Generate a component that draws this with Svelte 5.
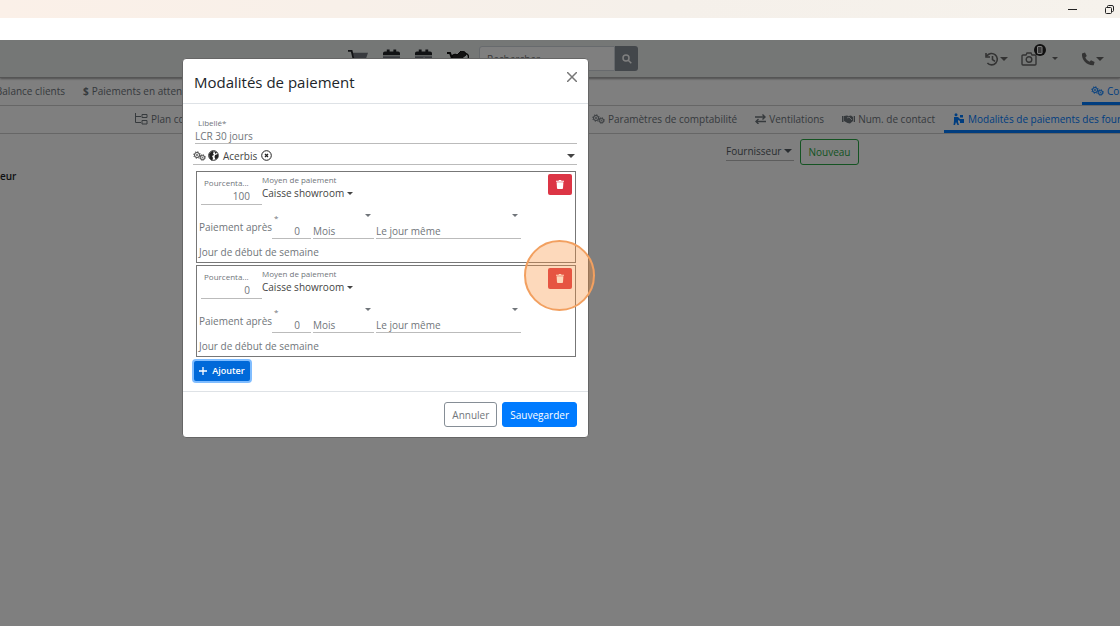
<script>
  let rows = $state([
    { percent: "100", delay: "0" },
    { percent: "0", delay: "0" },
  ]);
  let label = $state("LCR 30 jours");

  function addRow() {
    rows.push({ percent: "0", delay: "0" });
  }

  function removeRow(index) {
    rows = rows.filter((_, i) => i !== index);
  }
</script>

{#snippet gears()}
  <svg class="icon-gears" viewBox="0 0 26 20" fill="none" stroke="currentColor" aria-hidden="true">
    <circle cx="8" cy="8" r="5" stroke-width="2" />
    <circle cx="8" cy="8" r="6.5" stroke-width="2" stroke-dasharray="2.5 2.6" />
    <circle cx="8" cy="8" r="1.5" stroke-width="1.5" />
    <circle cx="19" cy="13" r="4.2" stroke-width="2" />
    <circle cx="19" cy="13" r="5.6" stroke-width="2" stroke-dasharray="2.2 2.2" />
    <circle cx="19" cy="13" r="1" stroke-width="1.5" />
  </svg>
{/snippet}

{#snippet calendar(dot)}
  <svg class="icon-calendar" viewBox="0 0 18 20" aria-hidden="true">
    <path d="M2 2h2V0h3v2h4V0h3v2h2a2 2 0 0 1 2 2v2H0V4a2 2 0 0 1 2-2z" fill="#222428" />
    <path d="M0 7h18v11a2 2 0 0 1-2 2H2a2 2 0 0 1-2-2z" fill="#70747c" />
    {#if dot}<path d="M7 10l3-2v10H8v-7z" fill="#ddd" />{/if}
  </svg>
{/snippet}

<div class="titlebar">
  <button aria-label="Réduire">
    <svg width="9" height="9" viewBox="0 0 9 9"><path d="M0 4.5h9" stroke="#222" /></svg>
  </button>
  <button aria-label="Restaurer">
    <svg width="9" height="9" viewBox="0 0 9 9" fill="none" stroke="#222">
      <rect x="0.5" y="2.5" width="6" height="6" rx="1" />
      <path d="M2.5 2V1.5a1 1 0 0 1 1-1H7a1.5 1.5 0 0 1 1.5 1.5v3.5a1 1 0 0 1-1 1H7" />
    </svg>
  </button>
</div>
<div class="toolbar"></div>

<div class="page">
  <header>
    <div class="shortcuts">
      <svg class="icon-cart" viewBox="0 0 22 20" aria-hidden="true">
        <path d="M5 3h17l-3 9H7z" fill="#70747c" />
        <path d="M0 1h4l3 13h12" fill="none" stroke="#222428" stroke-width="2" />
        <circle cx="9" cy="18" r="2" /><circle cx="17" cy="18" r="2" />
      </svg>
      {@render calendar(false)}
      {@render calendar(true)}
      <svg class="icon-moto" viewBox="0 0 22 16" fill="none" stroke="#111" aria-hidden="true">
        <path d="M0 2h3l3 8h6" stroke-width="2" />
        <circle cx="8" cy="7" r="3" stroke-width="2" />
        <circle cx="18" cy="6" r="3.5" stroke-width="1.5" />
        <path d="M5 5l3-2 2 1 4-4 4 1 1 3-4 3-3 3H8z" fill="#222" />
      </svg>
    </div>
    <form class="search">
      <input type="search" placeholder="Rechercher" aria-label="Rechercher" />
      <button type="button" aria-label="Lancer la recherche">
        <svg width="10" height="10" viewBox="0 0 10 10" fill="none" stroke="#fff" stroke-width="1.5">
          <circle cx="4" cy="4" r="3" /><path d="M6.2 6.2L9.3 9.3" />
        </svg>
      </button>
    </form>
    <div class="tools">
      <button class="tool" aria-label="Historique">
        <svg width="14" height="14" viewBox="0 0 14 14" fill="none" stroke="currentColor" stroke-width="1.6">
          <path d="M2 3.8A5.700 5.700 0 1 1 2.400 11M1 1v4h4M7.500 4v3.500l2.500 1.800" />
        </svg>
        <span class="caret"></span>
      </button>
      <button class="tool camera" aria-label="Photos">
        <svg width="16" height="14" viewBox="0 0 16 14" fill="none" stroke="currentColor" stroke-width="1.4">
          <path d="M2 3h3l1-2h4l1 2h3a1 1 0 0 1 1 1v8a1 1 0 0 1-1 1H2a1 1 0 0 1-1-1V4a1 1 0 0 1 1-1z" />
          <circle cx="8" cy="7.5" r="2.8" />
        </svg>
        <svg class="phone-badge" width="12" height="12" viewBox="0 0 12 12">
          <circle cx="6" cy="6" r="6" fill="#222" />
          <rect x="3.5" y="2.5" width="4.500" height="7" rx=".5" fill="#777" stroke="#fff" />
        </svg>
        <span class="caret small"></span>
      </button>
      <button class="tool" aria-label="Téléphone">
        <svg width="14" height="14" viewBox="0 0 14 14" fill="currentColor">
          <path d="M1 1.500L4 .5l1.800 3.600L4.300 5.500c.8 1.800 2.200 3.200 4.200 4.200L10 8.200l3.600 1.800-.9 3.200C6.500 14 .3 8 1 1.500z" />
        </svg>
        <span class="caret"></span>
      </button>
    </div>
  </header>

  <nav class="tabs main-tabs">
    <div class="tab-start"><a href="#balance">Balance clients</a></div>
    <a href="#attente"><b>$</b> Paiements en attente</a>
    <a class="active last" href="#compta">{@render gears()} Comptabilité</a>
  </nav>
  <nav class="tabs sub-tabs">
    <a class="plan" href="#plan">
      <svg width="13" height="12" viewBox="0 0 13 12" fill="none" stroke="currentColor">
        <path d="M.5 0v9.500H6M.5 3.500H6M7 1.500h5v3H7zM7 7.500h5v3.500H7z" />
      </svg>
      Plan comptable
    </a>
    <a href="#parametres">{@render gears()} Paramètres de comptabilité</a>
    <a href="#ventilations">
      <svg width="11" height="10" viewBox="0 0 11 10" fill="none" stroke="currentColor" stroke-width="1.4">
        <path d="M0 3h10M7.500.5L10 3 7.500 5.500M11 7.500H1M3.500 5L1 7.500 3.500 10" />
      </svg>
      Ventilations
    </a>
    <a href="#contact">
      <svg width="13" height="10" viewBox="0 0 13 10" fill="currentColor">
        <path d="M0 2h1.500v6H0zM2 2l3-.5L6.500 2 9 1.500 11 3v4L8 9.500 5.500 9 2 7zM11.700 2H13v6h-1.300z" />
        <path d="M5 4l2-1 3 3" fill="none" stroke="#fff" stroke-width=".7" />
      </svg>
      Num. de contact
    </a>
    <a class="active" href="#modalites">
      <svg width="12" height="12" viewBox="0 0 12 12" fill="currentColor">
        <circle cx="3" cy="1.700" r="1.500" />
        <path d="M1 4h4l2 2h4v4H7V8L5 7v2l1 3H4.500L3 9l-1 3H.5L1 8zM7 2h3v2.500H7z" />
      </svg>
      Modalités de paiements des fournisseurs
    </a>
  </nav>

  <main>
    <strong>eur</strong>
    <div class="filters">
      <div class="filter">
        <select aria-label="Type"><option>Fournisseur</option></select>
        <span class="caret"></span>
      </div>
      <button class="new">Nouveau</button>
    </div>
  </main>

  <div class="backdrop">
    <div class="modal" role="dialog" aria-labelledby="modal-title">
      <div class="modal-header">
        <h1 id="modal-title">Modalités de paiement</h1>
        <button class="close" aria-label="Fermer">
          <svg width="10" height="10" viewBox="0 0 10 10" stroke="#777" stroke-width="1.5">
            <path d="M0 0l10 10M10 0L0 10" />
          </svg>
        </button>
      </div>

      <div class="modal-body">
        <div class="libelle">
          <label for="libelle">Libellé*</label>
          <input id="libelle" bind:value={label} />
        </div>

        <div class="supplier">
          {@render gears()}
          <svg width="11" height="11" viewBox="0 0 11 11">
            <circle cx="5.5" cy="5.5" r="4.800" fill="#fff" stroke="#222" />
            <path d="M1 4l3-3 2 .5-1 2 1 1.500-2 1 1 2-1 3L1.500 8zM7 5l3-1v3.500L7.500 9.500 6.500 7z" fill="#222" />
            <path d="M6 1l3 1.500L7.500 4z" fill="#222" />
          </svg>
          <span class="supplier-name">Acerbis</span>
          <button aria-label="Retirer Acerbis">
            <svg width="11" height="11" viewBox="0 0 11 11" fill="none" stroke="#222">
              <circle cx="5.5" cy="5.5" r="4.800" />
              <path d="M4 4l3 3M7 4L4 7" stroke-width="1.300" />
            </svg>
          </button>
          <span class="caret"></span>
        </div>

        {#each rows as row, i}
          <section class="term">
            <div class="term-top">
              <div class="percent">
                <label for="percent-{i}">Pourcenta...</label>
                <input id="percent-{i}" bind:value={row.percent} />
              </div>
              <div class="method">
                <label for="method-{i}">Moyen de paiement</label>
                <div class="method-value">
                  <select id="method-{i}"><option>Caisse showroom</option></select>
                  <span class="caret small"></span>
                </div>
              </div>
              <div class="remove">
                <button aria-label="Supprimer" onclick={() => removeRow(i)}>
                  <svg width="8" height="9" viewBox="0 0 8 9" fill="#fff">
                    <path d="M0 .7h2.500L3 0h2l.5.7H8v1.100H0zM.6 2.300h6.800L7 8.200a.9.9 0 0 1-.9.8H1.900a.9.9 0 0 1-.9-.8z" />
                  </svg>
                </button>
                {#if i === 1}<span class="halo"></span>{/if}
              </div>
            </div>
            <div class="term-delay">
              <span class="after">Paiement après</span>
              <div class="field delay">
                <label for="delay-{i}">*</label>
                <input id="delay-{i}" bind:value={row.delay} />
              </div>
              <div class="field unit">
                <span class="caret small"></span>
                <select aria-label="Unité"><option>Mois</option></select>
              </div>
              <div class="field day">
                <span class="caret small"></span>
                <select aria-label="Jour"><option>Le jour même</option></select>
              </div>
            </div>
            <div class="week-start">Jour de début de semaine</div>
          </section>
        {/each}

        <button class="add" onclick={addRow}>
          <svg width="8" height="8" viewBox="0 0 8 8" stroke="#fff" stroke-width="1.300">
            <path d="M4 0v8M0 4h8" />
          </svg>
          Ajouter
        </button>
      </div>

      <div class="modal-footer">
        <button class="cancel">Annuler</button>
        <button class="save">Sauvegarder</button>
      </div>
    </div>
  </div>
</div>

<style>
  :global(body) {
    margin: 0;
    font-family: "Open Sans", "Noto Sans", sans-serif;
    font-size: 10px;
    line-height: 14px;
    color: #212529;
    background: #fff;
  }

  :global(#app) {
    display: flex;
    flex-direction: column;
    min-height: 100vh;
    overflow: hidden;
  }

  button,
  input,
  select {
    font: inherit;
    color: inherit;
    margin: 0;
    padding: 0;
    border: 0;
    border-radius: 0;
    background: none;
    appearance: none;
    box-sizing: border-box;
    min-width: 0;
  }

  svg {
    display: block;
    flex: none;
  }

  .caret {
    flex: none;
    border: 4px solid transparent;
    border-top-color: currentColor;
    border-bottom: 0;
  }

  .caret.small {
    border-width: 3px;
    border-bottom: 0;
  }

  .icon-gears {
    width: 13px;
    height: 10px;
  }

  .titlebar {
    display: flex;
    justify-content: flex-end;
    align-items: center;
    gap: 28px;
    height: 18px;
    padding-right: 6px;
    background: linear-gradient(90deg, #fbf0e8, #f5f0ea 60%, #f6f2ec);
  }

  .toolbar {
    height: 22px;
    background: #fff;
  }

  .page {
    position: relative;
    flex: 1;
    overflow: hidden;
  }

  header {
    display: flex;
    align-items: center;
    height: 37px;
    padding: 0 16px 0 348px;
    background: #eaefed;
    border-bottom: 1px solid #aaa;
    box-shadow: 0 1px 2px #999;
  }

  .shortcuts {
    display: flex;
    align-items: center;
    gap: 15px;
  }

  .icon-cart {
    width: 20px;
    height: 20px;
  }

  .icon-calendar {
    width: 17px;
    height: 20px;
  }

  .icon-moto {
    width: 22px;
    height: 16px;
  }

  .search {
    display: flex;
    width: 159px;
    height: 25px;
    margin-left: 10px;
  }

  .search input {
    flex: 1;
    padding: 0 7px;
    border: 1px solid #ced4da;
    border-radius: 3px 0 0 3px;
    background: #fff;
  }

  .search button {
    display: grid;
    place-items: center;
    width: 23px;
    border-radius: 0 3px 3px 0;
    background: #868e96;
  }

  .tools {
    display: flex;
    gap: 13px;
    margin-left: auto;
    color: #666;
  }

  .tool {
    display: flex;
    align-items: center;
    gap: 1px;
  }

  .camera {
    position: relative;
    gap: 15px;
    margin-right: 10px;
  }

  .phone-badge {
    position: absolute;
    left: 13px;
    top: -8px;
  }

  .tabs {
    display: flex;
    height: 27px;
    border-bottom: 1px solid #ccc;
    white-space: nowrap;
    overflow: hidden;
  }

  .tabs a {
    display: flex;
    align-items: center;
    flex: none;
    gap: 3px;
    padding: 2px 9px 0;
    color: #6d747b;
    text-decoration: none;
    border-bottom: 3px solid transparent;
  }

  .tabs a.active {
    color: #007bff;
    border-color: #007bff;
  }

  .tab-start {
    display: flex;
    justify-content: flex-end;
    width: 74px;
  }

  .tabs a.last {
    width: 20px;
    margin-left: auto;
  }

  .plan {
    width: 439px;
  }

  .sub-tabs {
    padding-left: 126px;
  }

  main {
    display: flex;
    padding-top: 5px;
  }

  main strong {
    width: 726px;
    padding-top: 30px;
    font-weight: 600;
  }

  .filters {
    display: flex;
    align-items: flex-start;
    gap: 6px;
  }

  .filter {
    display: flex;
    align-items: center;
    justify-content: space-between;
    width: 68px;
    height: 20px;
    margin-top: 2px;
    padding-right: 2px;
    border-bottom: 1px solid #bbb;
    color: #555c63;
    box-sizing: border-box;
  }

  .new {
    width: 59px;
    height: 26px;
    border: 1px solid #28a745;
    border-radius: 3px;
    color: #28a745;
  }

  .backdrop {
    position: absolute;
    inset: 0;
    padding: 18px 20px 0 182px;
    background: rgba(0, 0, 0, 0.5);
  }

  .modal {
    max-width: 407px;
    border: 1px solid #666;
    border-radius: 4px;
    background: #fff;
    box-sizing: border-box;
  }

  .modal-header {
    display: flex;
    justify-content: space-between;
    align-items: flex-start;
    padding: 13px 11px 11px;
    border-bottom: 1px solid #dee2e6;
  }

  h1 {
    margin: 0;
    font-size: 15px;
    font-weight: 500;
    line-height: 20px;
  }

  .modal-body {
    display: flex;
    flex-direction: column;
    padding: 13px 11px 10px 10px;
    color: #70757a;
  }

  .libelle {
    display: flex;
    flex-direction: column;
    margin-left: 2px;
    border-bottom: 1px solid #bbb;
  }

  label {
    font-size: 8px;
    line-height: 12px;
  }

  .libelle label {
    padding-left: 3px;
    line-height: 11px;
  }

  .libelle input {
    height: 15px;
  }

  .supplier {
    display: flex;
    align-items: center;
    gap: 2px;
    height: 17px;
    padding: 3px 2px 0 0;
    border-bottom: 1px solid #bbb;
    color: #444;
  }

  .supplier-name {
    padding: 0 2px;
  }

  .supplier .caret {
    margin-left: auto;
  }

  .term {
    display: flex;
    flex-direction: column;
    height: 90px;
    margin: 6px 1px 0 3px;
    border: 1px solid #777;
  }

  .term + .term {
    margin-top: 2px;
  }

  .term-top {
    display: flex;
    height: 36px;
    padding: 2px 3px 0 4px;
  }

  .percent {
    display: flex;
    flex-direction: column;
    width: 61px;
    height: 31px;
    border-bottom: 1px solid #bbb;
    box-sizing: border-box;
  }

  .percent label {
    padding: 3px 0 0 3px;
  }

  .percent input {
    width: 100%;
    padding-right: 12px;
    text-align: right;
  }

  .method {
    display: flex;
    flex-direction: column;
  }

  .method-value {
    display: flex;
    align-items: center;
    gap: 2px;
    color: #444;
  }

  .remove {
    position: relative;
    height: 21px;
    margin-left: auto;
  }

  .remove button {
    display: grid;
    place-items: center;
    width: 24px;
    height: 21px;
    border-radius: 2px;
    background: #dc3545;
  }

  .halo {
    position: absolute;
    left: -24px;
    top: -28px;
    width: 71px;
    height: 71px;
    border: 2px solid #f2a060;
    border-radius: 50%;
    background: rgba(250, 145, 60, 0.35);
    box-sizing: border-box;
    pointer-events: none;
  }

  .term-delay {
    display: flex;
    height: 29px;
    padding-left: 2px;
    gap: 2px;
  }

  .after {
    width: 71px;
    padding-top: 10px;
    white-space: nowrap;
  }

  .field {
    display: flex;
    flex-direction: column;
    justify-content: space-between;
    border-bottom: 1px solid #bbb;
    box-sizing: border-box;
  }

  .field label {
    padding: 2px 0 0 2px;
  }

  .field .caret {
    align-self: flex-end;
    margin: 4px 3px 0 0;
  }

  .delay {
    width: 39px;
  }

  .delay input {
    width: 100%;
    padding-right: 11px;
    text-align: right;
  }

  .unit {
    width: 61px;
  }

  .day {
    width: 145px;
  }

  .week-start {
    padding: 6px 0 0 2px;
  }

  .add {
    display: flex;
    align-items: center;
    justify-content: center;
    gap: 5px;
    align-self: flex-start;
    width: 56px;
    height: 20px;
    margin: 4px 0 0 1px;
    border-radius: 2px;
    background: #0069d9;
    box-shadow: 0 0 0 2px #80bdff;
    color: #fff;
    font-size: 9px;
    font-weight: 600;
  }

  .modal-footer {
    display: flex;
    justify-content: flex-end;
    gap: 5px;
    padding: 10px 11px;
    border-top: 1px solid #dee2e6;
  }

  .modal-footer button {
    height: 25px;
    padding: 0 7px;
    border: 1px solid #868e96;
    border-radius: 3px;
    color: #70757a;
  }

  .modal-footer .save {
    border-color: #007bff;
    background: #007bff;
    color: #fff;
    font-weight: 500;
  }
</style>
